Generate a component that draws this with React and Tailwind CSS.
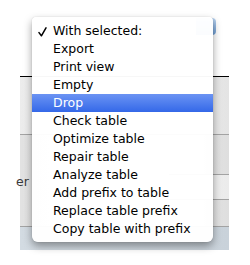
const items = [
    "Export",
    "Print view",
    "Empty",
    "Drop",
    "Check table",
    "Optimize table",
    "Repair table",
    "Analyze table",
    "Add prefix to table",
    "Replace table prefix",
    "Copy table with prefix",
];

const App = () => {
    return (
        <div className="relative w-[250px] h-[265px] bg-white overflow-hidden font-['DejaVu_Sans',sans-serif] text-[12.5px]">

            {/* page behind the menu */}
            <div className="ml-[20px] w-[209px]">
                <div className="h-[77px] border-b border-black bg-white"></div>
                <div className="h-[58px] border-b border-[#a3a3a3] bg-gradient-to-r from-[#ececec] via-[#fafafa] to-[#e4e4e4]"></div>
                <div className="flex h-[92px] border-b border-[#a3a3a3]">
                    <div className="flex-1 flex items-center bg-gradient-to-r from-[#e2e2e2] to-[#ececec] pt-[4px]">
                        <span className="-ml-[4px] text-[#3a3a3a] whitespace-nowrap">er</span>
                    </div>
                    <div className="w-[60px] flex flex-col">
                        <div className="h-[40px] border-b border-[#a3a3a3] bg-gradient-to-r from-[#ececec] to-[#dedede]"></div>
                        <div className="h-[25px] border-b border-[#a3a3a3] bg-gradient-to-r from-[#f8f8f8] to-[#ebebeb]"></div>
                        <div className="flex-1 bg-gradient-to-r from-[#ececec] to-[#dedede]"></div>
                    </div>
                </div>
                <div className="h-[23px] bg-gradient-to-r from-[#d3dbe2] to-[#c9d2da]"></div>
            </div>

            {/* select control peeking out */}
            <div className="absolute left-[196px] top-[18px] w-[20px] h-[17px] rounded-r-[4px] bg-gradient-to-b from-[#b9d2ee] to-[#6f9fd6]"></div>

            {/* dropdown menu */}
            <div className="absolute left-[32px] top-[17px] w-[181px] h-[225px] pt-[5px] pb-[4px] bg-white/[0.97] rounded-[4px] rounded-b-[6px] shadow-[0_4px_9px_rgba(0,0,0,0.38),0_0_1px_rgba(0,0,0,0.25)]">
                <div className="relative h-[18px] leading-[18px] pl-[21px] text-black">
                    <svg className="absolute left-[6px] top-[5px]" width="9" height="10" viewBox="0 0 9 10">
                        <path d="M1 5.6 L3.4 8.8 L8 0.8" fill="none" stroke="#000" strokeWidth="1.5" strokeLinecap="round" strokeLinejoin="round" />
                    </svg>
                    With selected:
                </div>
                {items.map((item) => (
                    <div
                        key={item}
                        className={
                            item === "Drop"
                                ? "h-[18px] leading-[18px] pl-[21px] text-white bg-gradient-to-b from-[#6b93f3] to-[#3468e8]"
                                : "h-[18px] leading-[18px] pl-[21px] text-black"
                        }
                    >
                        {item}
                    </div>
                ))}
            </div>
        </div>
    )
}

export default App
